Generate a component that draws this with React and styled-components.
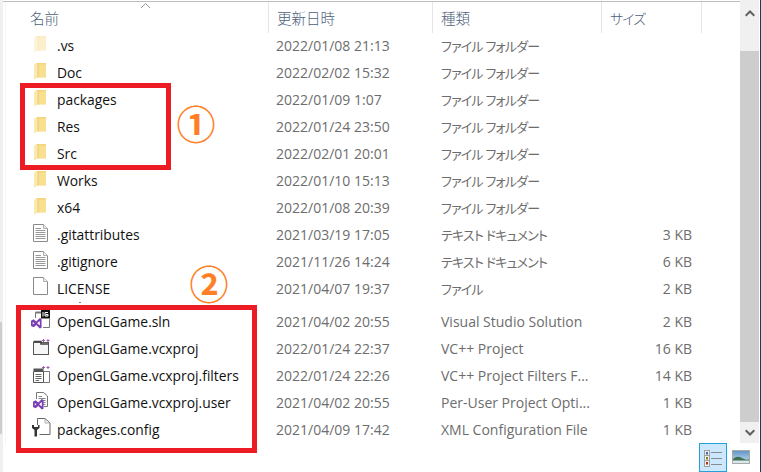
import React from "react";
import styled, { createGlobalStyle } from "styled-components";

const Global = createGlobalStyle`
  html, body { margin: 0; padding: 0; background: #fff; }
  #root { width: 761px; height: 472px; overflow: hidden; }
`;

const Window = styled.div`
  position: relative;
  width: 761px;
  height: 472px;
  display: grid;
  grid-template-columns: 3px 737px 19px 1px 1px;
  grid-template-rows: 443px 29px;
  background: #fff;
  overflow: hidden;
  font-family: "Open Sans", "Noto Sans CJK JP", sans-serif;
  font-feature-settings: "palt";
`;

const LeftRail = styled.div`
  grid-row: 1 / 3;
  background: #f0f0f0;
  display: flex;
  flex-direction: column;
  padding-top: 322px;
`;
const LeftThumb = styled.div`
  height: 112px;
  width: 2px;
  background: #cdcdcd;
`;

const Pane = styled.div`
  position: relative;
  margin-top: 1px;
  border-top: 1px solid #bdbdbd;
  display: flex;
  flex-direction: column;
  &::before {
    content: "";
    position: absolute;
    left: 2px;
    top: 0;
    bottom: 0;
    width: 1px;
    background: #f6f6f6;
  }
`;

const cols = "265px 164px 169px 100px 39px";

const Header = styled.div`
  height: 31px;
  flex: none;
  display: grid;
  grid-template-columns: ${cols};
  align-items: stretch;
`;
const HeadCell = styled.div`
  display: flex;
  align-items: center;
  padding-left: ${(p) => p.$pl ?? 8}px;
  box-sizing: border-box;
  font-size: ${(p) => (p.$kana ? 14 : 14.5)}px;
  letter-spacing: ${(p) => (p.$kana ? -1 : 0)}px;
  color: #4c607a;
  font-family: "Noto Sans CJK JP", sans-serif;
  font-weight: 300;
  border-left: ${(p) => (p.$sep ? "1px solid #e5e5e5" : "none")};
`;

const Rows = styled.div`
  display: flex;
  flex-direction: column;
`;
const Row = styled.div`
  height: ${(p) => p.$h}px;
  flex: none;
  box-sizing: border-box;
  padding-bottom: 2px;
  margin-top: ${(p) => p.$mt ?? 0}px;
  display: grid;
  grid-template-columns: ${cols};
  align-items: center;
  font-size: 14px;
  white-space: nowrap;
`;
const NameCell = styled.div`
  display: flex;
  align-items: center;
  padding-left: 30px;
  color: #111;
  font-size: 13.85px;
`;
const IconSlot = styled.div`
  width: 24px;
  flex: none;
  display: flex;
  align-items: center;
  padding-bottom: 4px;
  height: 20px;
`;
const Glyph = styled.svg`
  flex: none;
  margin-left: ${(p) => p.$ml ?? 0}px;
  opacity: ${(p) => (p.$faded ? 0.45 : 1)};
`;
const DateCell = styled.div`
  color: #6d6d6d;
  padding-left: 8px;
`;
const TypeCell = styled.div`
  color: #6d6d6d;
  padding-left: 9px;
  font-size: ${(p) => (p.$kana ? 13 : 14)}px;
  letter-spacing: ${(p) => (p.$kana ? -0.8 : 0)}px;
`;
const SizeCell = styled.div`
  color: #6d6d6d;
  text-align: right;
  padding-right: 9px;
`;

const RightBar = styled.div`
  grid-row: 1;
  grid-column: 3;
  background: #f0f0f0;
  display: flex;
  flex-direction: column;
  align-items: center;
`;
const ScrollBtn = styled.div`
  height: ${(p) => p.$h}px;
  flex: none;
  display: flex;
  align-items: flex-start;
  justify-content: center;
  padding-top: ${(p) => p.$pt}px;
  box-sizing: border-box;
`;
const Thumb = styled.div`
  flex: 1;
  align-self: stretch;
  background: #cdcdcd;
`;
const Edge = styled.div`
  grid-row: 1 / 3;
  grid-column: 5;
  background: #0f3f66;
`;

const StatusBar = styled.div`
  grid-row: 2;
  grid-column: 2 / 5;
  display: flex;
  justify-content: flex-end;
  align-items: stretch;
  padding-right: 5px;
`;
const ViewBtn = styled.div`
  width: 28px;
  box-sizing: border-box;
  display: flex;
  align-items: flex-start;
  justify-content: center;
  padding-top: ${(p) => p.$pt}px;
  background: ${(p) => (p.$on ? "#cce8ff" : "transparent")};
  border: 1px solid ${(p) => (p.$on ? "#26a0da" : "transparent")};
`;

const RedBox = styled.div`
  position: absolute;
  box-sizing: border-box;
  left: ${(p) => p.$x}px;
  top: ${(p) => p.$y}px;
  width: ${(p) => p.$w}px;
  height: ${(p) => p.$h}px;
  border: 5px solid #ed1c24;
`;
const Circled = styled.div`
  position: absolute;
  left: ${(p) => p.$x}px;
  top: ${(p) => p.$y}px;
  width: 40px;
  height: 40px;
  display: flex;
  align-items: center;
  justify-content: center;
  font-family: "Noto Sans CJK JP", sans-serif;
  font-size: 39px;
  font-weight: 700;
  line-height: 40px;
  color: #ff7f27;
  font-feature-settings: normal;
`;
const SortCaret = styled.svg`
  position: absolute;
  left: 140px;
  top: 2px;
`;
const Speck = styled.div`
  position: absolute;
  left: 79px;
  top: 302px;
  width: 2px;
  height: 1px;
  background: #888;
`;

const Folder = ({ faded }) => (
  <Glyph width="14" height="18" viewBox="0 0 14 18" $faded={faded}>
    <path d="M3 1 H13 V15.5 H3 Z" fill="#f6d57a" />
    <path d="M5 2.5 H13 V15 H5 Z" fill="#f9df90" />
    <path d="M1 2.5 L5 1 V15.5 L1 17.5 Z" fill="#fbeab0" />
    <path d="M5 1 V15.5" stroke="#e8c468" strokeWidth=".8" />
  </Glyph>
);

const DocLines = ({ lines = true }) => (
  <Glyph width="16" height="18" viewBox="0 0 16 18">
    <path d="M.5 .5 H10.5 L14.5 4.5 V17.5 H.5 Z" fill="#fff" stroke="#8a8a8a" />
    <path d="M10.5 .5 V4.5 H14.5" fill="#eee" stroke="#b0b0b0" />
    {lines && (
      <path d="M2.5 4.5 H8 M2.5 6.5 H12.5 M2.5 8.5 H12.5 M2.5 10.5 H12.5 M2.5 12.5 H12.5 M2.5 14.5 H12.5" stroke="#989898" />
    )}
  </Glyph>
);

const VsMark = ({ x = 0, y = 0, s = 1 }) => (
  <g transform={`translate(${x} ${y}) scale(${s})`}>
    <path d="M0 3 L3 1.5 L6 4 L10 0 L12 1 V11 L10 12 L6 8 L3 10.5 L0 9 Z" fill="#7b3fb5" />
    <path d="M2 4.5 V7.5 L4 6 Z M10 3.5 L7 6 L10 8.5 Z" fill="#fff" />
  </g>
);

const SlnIcon = () => (
  <Glyph width="20" height="19" viewBox="0 0 20 19" $ml={-2}>
    <path d="M4.5 8 V2.5 H10 M18.5 9 V17.5 H12" fill="none" stroke="#777" />
    <path d="M4.5 2.5 H11" stroke="#777" strokeWidth="2" />
    <rect x="10" y="0" width="9" height="8.5" fill="#111" />
    <path d="M12 2 V6.5" stroke="#fff" />
    <path d="M17 2.5 H14 V6 H17 V4.5 H14.5" stroke="#fff" fill="none" />
    <VsMark x={0} y={8} s={0.88} />
  </Glyph>
);

const Pluses = ({ x }) => (
  <path d={`M${x} 2.5 H${x + 3} M${x + 1.5} 1 V4 M${x + 4.5} 2.5 H${x + 7.5} M${x + 6} 1 V4`} stroke="#a05cb0" fill="none" />
);

const ProjIcon = () => (
  <Glyph width="18" height="18" viewBox="0 0 18 18">
    <rect x=".5" y="4.5" width="15" height="12" fill="#f6f6f6" stroke="#555" />
    <path d="M.5 3.5 H8 V6 H15.5" fill="none" stroke="#444" strokeWidth="1.6" />
    <Pluses x={9} />
  </Glyph>
);

const FiltersIcon = () => (
  <Glyph width="18" height="18" viewBox="0 0 18 18">
    <path d="M10 6.5 H16.5 V17.5 H11" fill="none" stroke="#777" />
    <rect x=".5" y="3.5" width="10" height="3" fill="#555" />
    <path d="M.5 6.5 H10.5 V17.5 H.5 Z" fill="#fff" stroke="#555" />
    <path d="M2.5 9.5 H8.5 M2.5 11.5 H8.5 M2.5 13.5 H8.5 M2.5 15.5 H6" stroke="#666" />
    <Pluses x={9} />
  </Glyph>
);

const UserIcon = () => (
  <Glyph width="16" height="18" viewBox="0 0 16 18">
    <path d="M3.5 7 V.5 H10.5 L14.5 4 V14.5 H11" fill="#fff" stroke="#777" />
    <path d="M5.5 4.5 H9 M5.5 6.5 H12.5 M8 8.5 H12.5 M10 10.5 H12.5 M10 12.5 H12.5" stroke="#888" />
    <VsMark x={0} y={7} s={0.88} />
  </Glyph>
);

const ConfigIcon = () => (
  <Glyph width="19" height="19" viewBox="0 0 19 19" $ml={-1}>
    <path d="M5.5 7 V.5 H13 L18 5 V16.5 H7.5" fill="#fff" stroke="#666" />
    <path d="M13 .5 V5 H18" fill="none" stroke="#aaa" />
    <path d="M0 7 V10 L2.5 12 V18.5 H5 V12 L7.5 10 V7 L6 7 V9 H2 V7 Z" fill="#333" />
  </Glyph>
);

const Chevron = ({ down }) => (
  <svg width="10" height="7" viewBox="0 0 10 7">
    <path d={down ? "M.7 1.2 L5 5.5 L9.3 1.2" : "M.7 5.8 L5 1.5 L9.3 5.8"} fill="none" stroke="#606060" strokeWidth="2" />
  </svg>
);

const DetailsGlyph = () => (
  <svg width="18" height="17" viewBox="0 0 18 17">
    <rect x=".5" y=".5" width="5" height="16" fill="#eee" stroke="#a0a0a0" />
    <path d="M.5 5.5 H5.5 M.5 10.5 H5.5" stroke="#a0a0a0" />
    <rect x="2" y="2" width="2" height="2.5" fill="#3a70b5" />
    <rect x="2" y="7" width="2" height="2.5" fill="#7f8a1e" />
    <rect x="2" y="12" width="2" height="2.5" fill="#b03020" />
    <path d="M7 2.5 H18 M7 8.5 H18 M7 14.5 H18" stroke="#8a8a8a" strokeWidth="1.2" />
  </svg>
);

const PreviewGlyph = () => (
  <svg width="18" height="14" viewBox="0 0 18 14">
    <defs>
      <linearGradient id="sky" x1="0" y1="0" x2="0" y2="1">
        <stop offset="0" stopColor="#5d93c9" />
        <stop offset="1" stopColor="#cfe3ee" />
      </linearGradient>
    </defs>
    <rect x=".5" y=".5" width="17" height="13" fill="url(#sky)" stroke="#a9a9a9" />
    <path d="M1 9 Q5 5 10 8 T17 9 V11 H1 Z" fill="#3f6f55" />
    <rect x="1" y="10.5" width="16" height="2.5" fill="#d8e8ea" />
  </svg>
);

const FT = "ファイル フォルダー";
const TX = "テキスト ドキュメント";
const rows = [
  { h: 27, icon: <Folder faded />, n: ".vs", d: "2022/01/08 21:13", t: FT, k: true },
  { h: 27, icon: <Folder />, n: "Doc", d: "2022/02/02 15:32", t: FT, k: true },
  { h: 27, icon: <Folder />, n: "packages", d: "2022/01/09 1:07", t: FT, k: true },
  { h: 27, icon: <Folder />, n: "Res", d: "2022/01/24 23:50", t: FT, k: true },
  { h: 27, icon: <Folder />, n: "Src", d: "2022/02/01 20:01", t: FT, k: true },
  { h: 27, icon: <Folder />, n: "Works", d: "2022/01/10 15:13", t: FT, k: true },
  { h: 27, icon: <Folder />, n: "x64", d: "2022/01/08 20:39", t: FT, k: true },
  { h: 27, icon: <DocLines />, n: ".gitattributes", d: "2021/03/19 17:05", t: TX, k: true, s: "3 KB" },
  { h: 27, icon: <DocLines />, n: ".gitignore", d: "2021/11/26 14:24", t: TX, k: true, s: "6 KB" },
  { h: 26, icon: <DocLines lines={false} />, n: "LICENSE", d: "2021/04/07 19:37", t: "ファイル", k: true, s: "2 KB" },
  { h: 27, mt: 7, icon: <SlnIcon />, n: "OpenGLGame.sln", d: "2021/04/02 20:55", t: "Visual Studio Solution", s: "2 KB" },
  { h: 27, icon: <ProjIcon />, n: "OpenGLGame.vcxproj", d: "2022/01/24 22:37", t: "VC++ Project", s: "16 KB" },
  { h: 27, icon: <FiltersIcon />, n: "OpenGLGame.vcxproj.filters", d: "2022/01/24 22:26", t: "VC++ Project Filters F...", s: "14 KB" },
  { h: 27, icon: <UserIcon />, n: "OpenGLGame.vcxproj.user", d: "2021/04/02 20:55", t: "Per-User Project Opti...", s: "1 KB" },
  { h: 27, icon: <ConfigIcon />, n: "packages.config", d: "2021/04/09 17:42", t: "XML Configuration File", s: "1 KB" },
];

export default function App() {
  return (
    <>
      <Global />
      <Window>
        <LeftRail>
          <LeftThumb />
        </LeftRail>
        <Pane>
          <Header>
            <HeadCell $pl={27}>名前</HeadCell>
            <HeadCell $sep>更新日時</HeadCell>
            <HeadCell $sep>種類</HeadCell>
            <HeadCell $sep $kana>サイズ</HeadCell>
            <HeadCell $sep />
          </Header>
          <Rows>
            {rows.map((r) => (
              <Row key={r.n} $h={r.h} $mt={r.mt}>
                <NameCell>
                  <IconSlot>{r.icon}</IconSlot>
                  {r.n}
                </NameCell>
                <DateCell>{r.d}</DateCell>
                <TypeCell $kana={r.k}>{r.t}</TypeCell>
                <SizeCell>{r.s}</SizeCell>
              </Row>
            ))}
          </Rows>
        </Pane>
        <RightBar>
          <ScrollBtn $h={51} $pt={10}>
            <Chevron />
          </ScrollBtn>
          <Thumb />
          <ScrollBtn $h={21} $pt={7}>
            <Chevron down />
          </ScrollBtn>
        </RightBar>
        <Edge />
        <StatusBar>
          <ViewBtn $on $pt={6}>
            <DetailsGlyph />
          </ViewBtn>
          <ViewBtn $pt={6}>
            <PreviewGlyph />
          </ViewBtn>
        </StatusBar>
        <SortCaret width="11" height="7" viewBox="0 0 11 7">
          <path d="M1 6 L5.5 1.5 L10 6" fill="none" stroke="#9a9a9a" />
        </SortCaret>
        <Speck />
        <RedBox $x={20} $y={83} $w={151} $h={87} />
        <RedBox $x={16} $y={305} $w={241} $h={148} />
        <Circled $x={176} $y={102}>①</Circled>
        <Circled $x={189} $y={262}>②</Circled>
      </Window>
    </>
  );
}
